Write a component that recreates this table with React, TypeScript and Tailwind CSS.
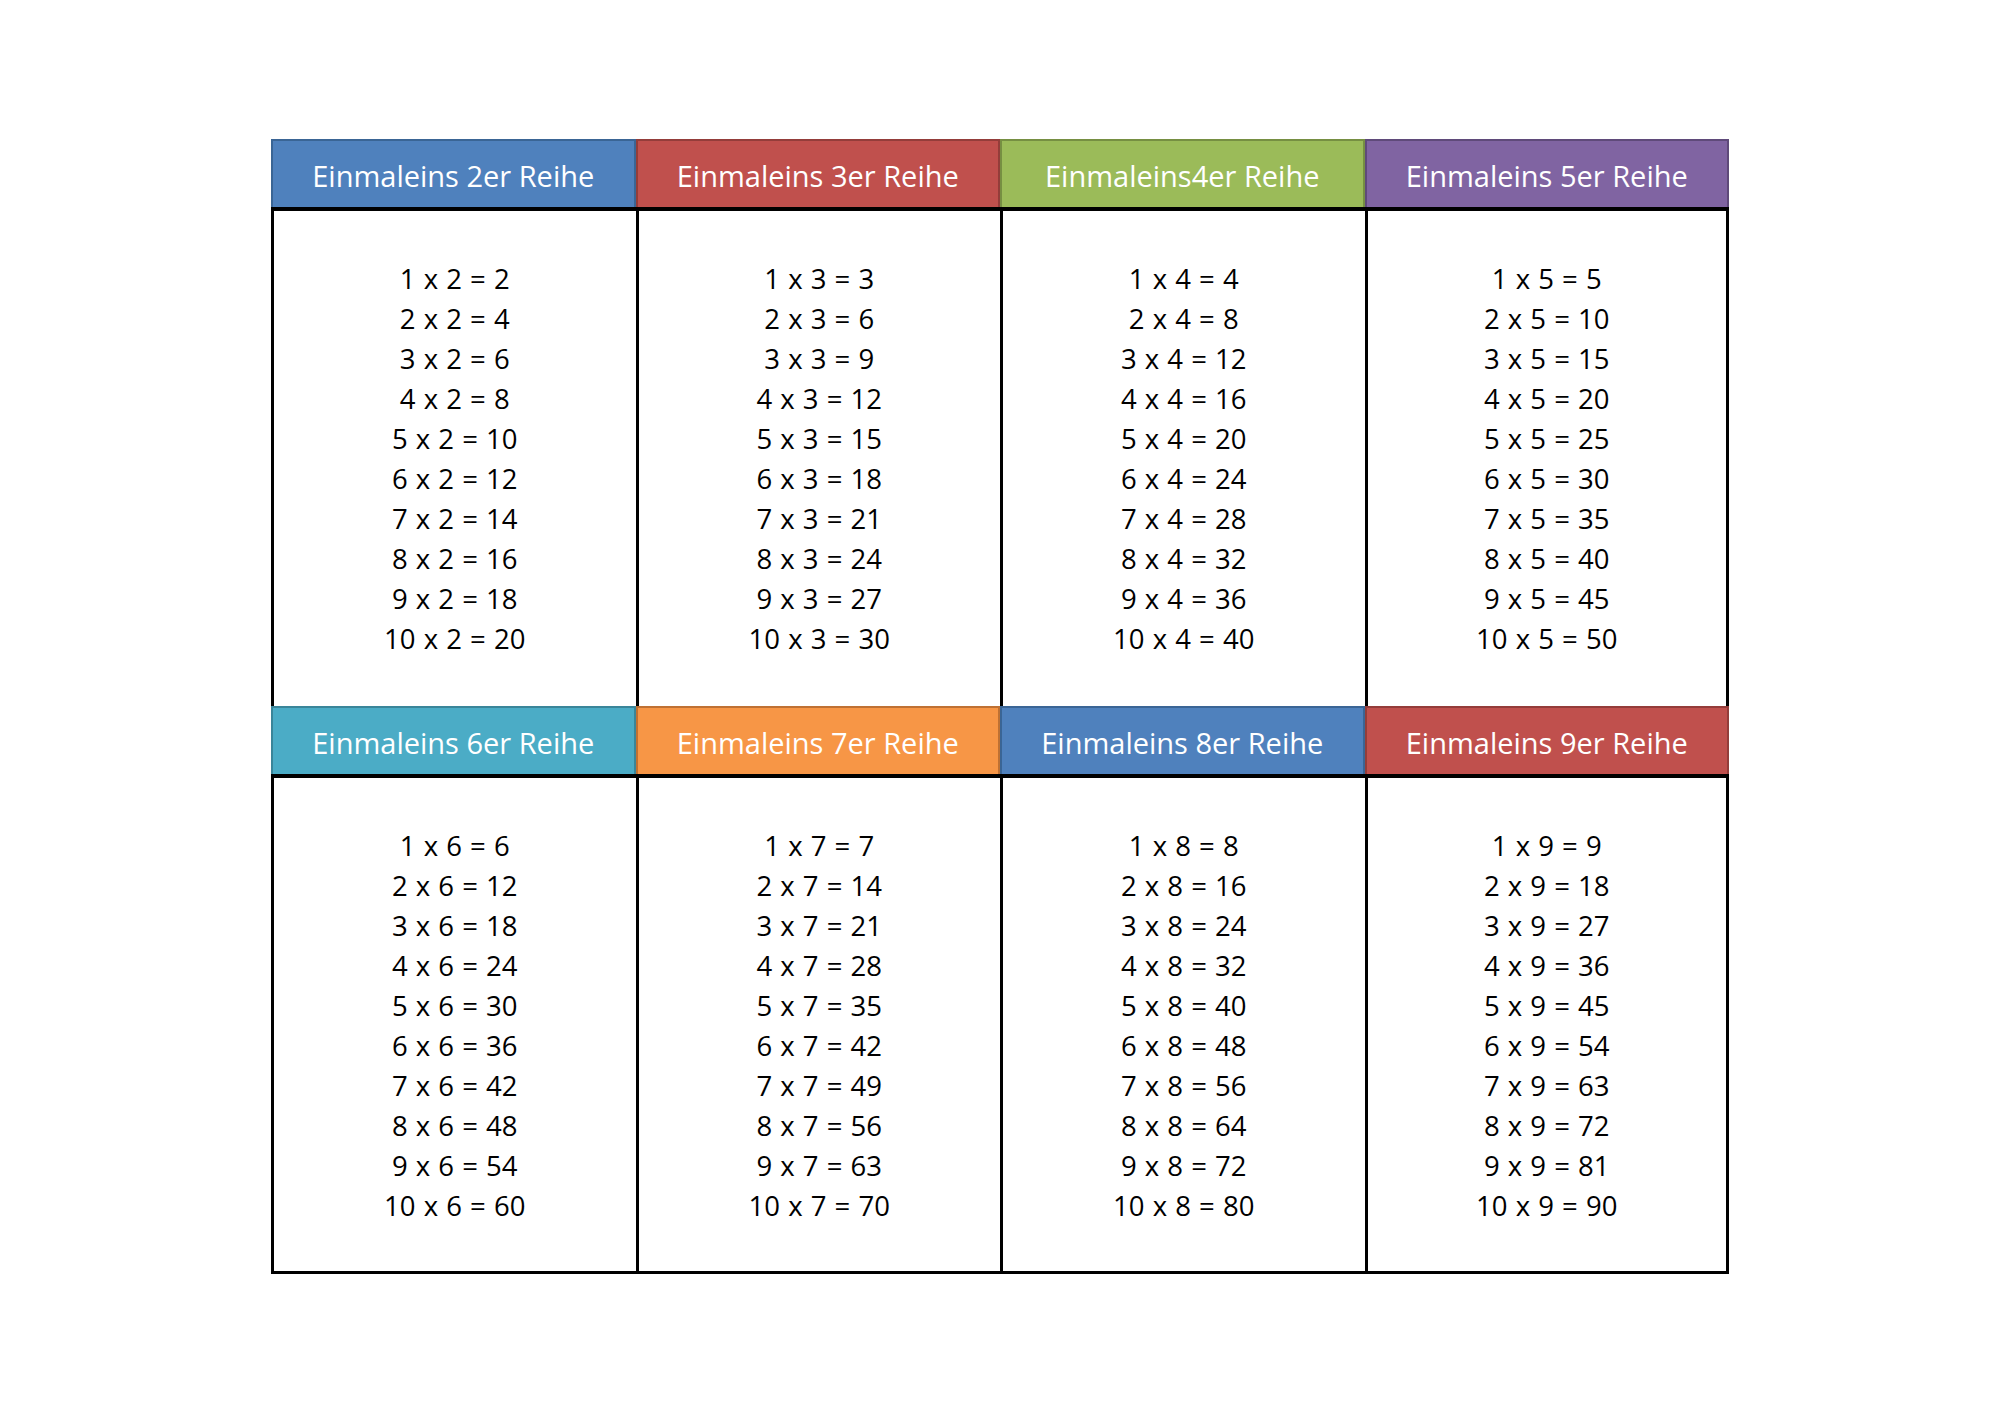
const tables = [
  { n: 2, title: 'Einmaleins 2er Reihe', head: 'bg-[#4f81bd] border-[#3a6595]' },
  { n: 3, title: 'Einmaleins 3er Reihe', head: 'bg-[#c0504d] border-[#943d3a]' },
  { n: 4, title: 'Einmaleins4er Reihe', head: 'bg-[#9bbb59] border-[#768f42]' },
  { n: 5, title: 'Einmaleins 5er Reihe', head: 'bg-[#8064a2] border-[#5f4a7a]' },
  { n: 6, title: 'Einmaleins 6er Reihe', head: 'bg-[#4bacc6] border-[#3a8599]' },
  { n: 7, title: 'Einmaleins 7er Reihe', head: 'bg-[#f79646] border-[#bf7133]' },
  { n: 8, title: 'Einmaleins 8er Reihe', head: 'bg-[#4f81bd] border-[#3a6595]' },
  { n: 9, title: 'Einmaleins 9er Reihe', head: 'bg-[#c0504d] border-[#943d3a]' },
];

function Column({ n, title, head, last, bottom }: { n: number; title: string; head: string; last: boolean; bottom: boolean }) {
  return (
    <div className="flex flex-col">
      <div className={`h-[68px] flex items-center justify-center border-2 border-b-0 pt-[3px] text-white text-[29px] ${head}`}>
        {title}
      </div>
      <div
        className={`flex flex-col items-center border-t-4 border-l-[3px] border-black pt-[48px] text-[27.5px] leading-[40px] [word-spacing:1px] text-black ${
          last ? 'border-r-[3px]' : ''
        } ${bottom ? 'h-[500px] border-b-[3px]' : 'h-[499px]'}`}
      >
        {Array.from({ length: 10 }, (_, i) => (
          <div key={i}>
            {i + 1} x {n} = {(i + 1) * n}
          </div>
        ))}
      </div>
    </div>
  );
}

export default function App() {
  return (
    <div className="min-h-[1413px] w-[2000px] bg-white pt-[139px] pl-[271px]" style={{ fontFamily: '"Open Sans", "Noto Sans", sans-serif' }}>
      <div className="grid w-[1458px] grid-cols-4">
        {tables.map((t, i) => (
          <Column key={t.n} {...t} last={i % 4 === 3} bottom={i >= 4} />
        ))}
      </div>
    </div>
  );
}
